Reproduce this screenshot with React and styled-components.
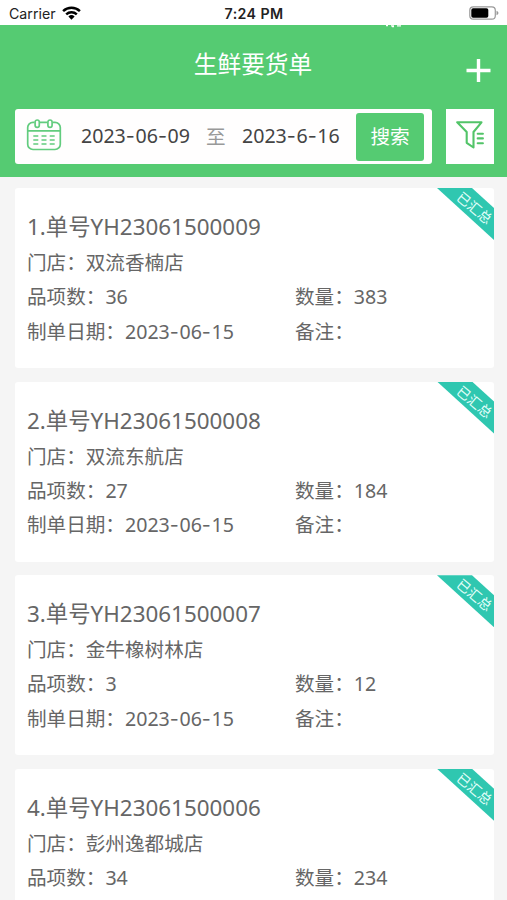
import styled, { createGlobalStyle } from "styled-components";

const orders = [
  {
    number: "YH23061500009",
    store: "双流香楠店",
    items: 36,
    quantity: 383,
    date: "2023-06-15",
  },
  {
    number: "YH23061500008",
    store: "双流东航店",
    items: 27,
    quantity: 184,
    date: "2023-06-15",
  },
  {
    number: "YH23061500007",
    store: "金牛橡树林店",
    items: 3,
    quantity: 12,
    date: "2023-06-15",
  },
  {
    number: "YH23061500006",
    store: "彭州逸都城店",
    items: 34,
    quantity: 234,
  },
];

const GlobalStyle = createGlobalStyle`
  * {
    box-sizing: border-box;
  }
  body {
    margin: 0;
    background-color: #f5f5f5;
    font-family: "Noto Sans", "Noto Sans CJK SC", sans-serif;
  }
`;

const Page = styled.main`
  height: 900px;
  overflow: hidden;
  display: flex;
  flex-direction: column;
`;

const StatusBar = styled.div`
  flex: none;
  height: 25px;
  padding: 2px 8px 0 9px;
  display: grid;
  grid-template-columns: 1fr auto 1fr;
  align-items: center;
  background-color: white;
  color: #222;
  font-family: Inter, sans-serif;
  font-size: 14.2px;
  line-height: 23px;
`;

const Carrier = styled.div`
  display: flex;
  align-items: center;
  gap: 6px;

  svg {
    margin-top: -2px;
  }
`;

const Clock = styled.div`
  font-size: 14.2px;
  font-weight: 600;
  letter-spacing: 0.4px;
`;

const Battery = styled.svg`
  justify-self: end;
  margin-top: -2px;
`;

const Header = styled.header`
  position: relative;
  flex: none;
  height: 152px;
  background-color: #55cb72;
  color: white;
`;

const Specks = styled.svg`
  position: absolute;
  top: 0;
  left: 385px;
`;

const TitleBar = styled.div`
  height: 84px;
  padding: 0 16px 0 15px;
  display: grid;
  grid-template-columns: 1fr auto 1fr;
`;

const Title = styled.h1`
  grid-column: 2;
  margin: 0;
  font-size: 23.7px;
  font-weight: 400;
  line-height: 79px;
`;

const AddIcon = styled.svg`
  justify-self: end;
  margin-top: 33px;
`;

const Filters = styled.div`
  display: flex;
  gap: 14px;
  padding: 0 13px 0 15px;
`;

const SearchBox = styled.div`
  width: 417px;
  height: 55px;
  padding: 0 8px 0 11px;
  display: flex;
  align-items: center;
  border-radius: 3px;
  background-color: #fffefe;
  color: #444;
  font-size: 19.6px;
  white-space: nowrap;
`;

const CalendarIcon = styled.svg`
  margin-bottom: 4px;
`;

const StartDate = styled.span`
  width: 125px;
  margin: 0 0 2px 19px;
`;

const To = styled.span`
  width: 36px;
  margin-bottom: 2px;
  color: #999;
`;

const EndDate = styled.span`
  margin-bottom: 2px;
`;

const SearchButton = styled.button`
  width: 68px;
  height: 48px;
  margin-left: auto;
  padding: 0 0 3px;
  border: 0;
  border-radius: 3px;
  background-color: #55cb72;
  color: white;
  font: inherit;
`;

const FilterButton = styled.button`
  width: 48px;
  height: 55px;
  padding: 0;
  border: 0;
  background-color: white;
`;

const Orders = styled.section`
  padding: 11px 13px 0 15px;
  display: flex;
  flex-direction: column;
  gap: 13.6px;
`;

const Order = styled.article`
  position: relative;
  flex: none;
  height: 180px;
  padding: 20px 12px 0;
  border-radius: 3px;
  background-color: white;
  color: #666;
  font-size: 19.6px;
`;

const OrderNumber = styled.h2`
  margin: 0 0 1px;
  font-size: 22.4px;
  font-weight: 400;
  line-height: 37px;
`;

const Row = styled.div`
  display: grid;
  grid-template-columns: 268px 1fr;
  line-height: 34.3px;
`;

const Ribbon = styled.div`
  position: absolute;
  top: 0;
  right: 0;
  width: 57px;
  height: 52px;
  clip-path: polygon(0 0, 35px 0, 57px 20px, 57px 52px);
  background-color: #2fc7b0;
`;

const RibbonText = styled.span`
  position: absolute;
  left: 17px;
  top: 10px;
  transform: rotate(40deg);
  color: #e4fffa;
  font-size: 13.6px;
  line-height: 20px;
  white-space: nowrap;
`;

const Dash = styled.span`
  font-family: Inter, sans-serif;
  letter-spacing: 0.6px;
`;

function DateText({ value }) {
  return value
    .split("-")
    .map((part, i) => (
      <span key={i}>
        {i > 0 && <Dash>-</Dash>}
        {part}
      </span>
    ));
}

function Wifi() {
  return (
    <svg width="19" height="14" viewBox="0 0 19 14">
      <g fill="none" stroke="black" strokeWidth="2.5">
        <path d="M1.1 5.2a12.2 12.2 0 0 1 16.8 0" />
        <path d="M4.2 8.3a7.8 7.8 0 0 1 10.6 0" />
      </g>
      <path d="M9.5 13.7 6.4 10.5a4.5 4.5 0 0 1 6.2 0z" />
    </svg>
  );
}

function Calendar() {
  return (
    <CalendarIcon width="36" height="34" viewBox="0 0 36 34" fill="none">
      <g stroke="#62cc7e" strokeWidth="1.7">
        <path d="M8.5 4.3H7A5.3 5.3 0 0 0 1.7 9.6v16.6a5.3 5.3 0 0 0 5.3 5.3h22a5.3 5.3 0 0 0 5.3-5.3V9.6A5.3 5.3 0 0 0 29 4.3h-2M14 4.3h7M2 12.9h32" />
        <rect x="9.1" y="2" width="4.2" height="7.4" rx="2.1" />
        <rect x="21.9" y="2" width="4.2" height="7.4" rx="2.1" />
        <path d="M7.3 18h5m3.2 0h5m3.2 0h5M7.3 22h5m3.2 0h5m3.2 0h5M7.3 26h5m3.2 0h5m3.2 0h5" />
      </g>
    </CalendarIcon>
  );
}

function Funnel() {
  return (
    <svg width="28" height="28" viewBox="0 0 28 28" fill="none">
      <g
        stroke="#52c468"
        strokeWidth="2.1"
        strokeLinecap="round"
        strokeLinejoin="round"
      >
        <path d="M1.2 1.3h24.3l-8 9.7v15.5l-6.8-4.7V11z" />
        <path d="M21.7 12.8h5.2M21.7 17.4h5.2M21.7 22.3h5.2" />
      </g>
    </svg>
  );
}

export default function App() {
  return (
    <>
      <GlobalStyle />
      <Page>
        <StatusBar>
          <Carrier>
            Carrier
            <Wifi />
          </Carrier>
          <Clock>7:24 PM</Clock>
          <Battery width="30" height="14" viewBox="0 0 30 14">
            <rect
              x="0.8"
              y="0.8"
              width="25.5"
              height="12.4"
              rx="3.5"
              fill="white"
              stroke="#999"
              strokeWidth="1.2"
            />
            <rect x="2.3" y="2.3" width="17" height="9.4" rx="1.8" />
            <path d="M27.5 4.8v4.4q2-.8 2-2.2t-2-2.2z" fill="#999" />
          </Battery>
        </StatusBar>
        <Header>
          <Specks width="18" height="3" viewBox="0 0 18 3">
            <path
              d="M1 .7h2M6 .8h3M7 1.6h2M12 .8h4"
              stroke="white"
              strokeWidth="1.2"
            />
          </Specks>
          <TitleBar>
            <Title>生鲜要货单</Title>
            <AddIcon width="25" height="25" viewBox="0 0 25 25">
              <path d="M0.5 12.5h24M12.5 1v23" stroke="white" strokeWidth="3.4" />
            </AddIcon>
          </TitleBar>
          <Filters>
            <SearchBox>
              <Calendar />
              <StartDate>
                <DateText value="2023-06-09" />
              </StartDate>
              <To>至</To>
              <EndDate>
                <DateText value="2023-6-16" />
              </EndDate>
              <SearchButton>搜索</SearchButton>
            </SearchBox>
            <FilterButton>
              <Funnel />
            </FilterButton>
          </Filters>
        </Header>
        <Orders>
          {orders.map((order, i) => (
            <Order key={order.number}>
              <OrderNumber>
                {i + 1}.单号{order.number}
              </OrderNumber>
              <Row>门店：{order.store}</Row>
              <Row>
                <span>品项数：{order.items}</span>
                <span>数量：{order.quantity}</span>
              </Row>
              {order.date && (
                <Row>
                  <span>
                    制单日期：
                    <DateText value={order.date} />
                  </span>
                  <span>备注：</span>
                </Row>
              )}
              <Ribbon>
                <RibbonText>已汇总</RibbonText>
              </Ribbon>
            </Order>
          ))}
        </Orders>
      </Page>
    </>
  );
}
